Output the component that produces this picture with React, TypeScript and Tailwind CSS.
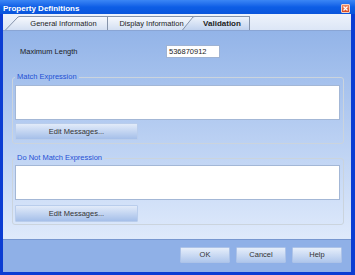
import React from 'react';

function CloseBox() {
  return (
    <div className="mt-[4px] w-[9px] h-[9px] bg-linear-to-b from-[#f08a64] to-[#d9481f] border border-[#f6d2c2] rounded-[1px] flex items-center justify-center">
      <svg width="5" height="5" viewBox="0 0 5 5">
        <path d="M0.5 0.5 L4.5 4.5 M4.5 0.5 L0.5 4.5" stroke="#fff" strokeWidth="1.2" />
      </svg>
    </div>
  );
}

function Slant({ w, from, to, id }: { w: number; from: string; to: string; id: string }) {
  return (
    <svg width={w} height="14" viewBox={`0 0 ${w} 14`} className="shrink-0 block">
      <defs>
        <linearGradient id={id} x1="0" y1="0" x2="0" y2="1">
          <stop offset="0" stopColor={from} />
          <stop offset="1" stopColor={to} />
        </linearGradient>
      </defs>
      <path d={`M0 14 L${w - 2} 1 Q${w - 1} 0.5 ${w} 0.5 L${w} 14 Z`} fill={`url(#${id})`} />
      <path d={`M0.5 14 L${w - 2} 1 Q${w - 1} 0.5 ${w} 0.5`} fill="none" stroke="#8593aa" strokeWidth="1" />
    </svg>
  );
}

function Tabs() {
  return (
    <div className="h-[17px] shrink-0 flex items-end pl-[2px] border-b border-[#8aa5d4] bg-linear-to-b from-[#eef3fb] to-[#dce6f6]">
      <Slant w={15} from="#f7f9fd" to="#d3dff2" id="t1" />
      <div className="w-[88px] h-[14px] flex items-center justify-center pt-[1px] border-t border-r border-[#8593aa] bg-linear-to-b from-[#f7f9fd] to-[#d3dff2]">
        General Information
      </div>
      <div className="w-[87px] h-[14px] flex items-center justify-center pt-[1px] border-t border-[#8593aa] bg-linear-to-b from-[#f7f9fd] to-[#d3dff2]">
        Display Information
      </div>
      <div className="-ml-[13px] flex items-end">
        <Slant w={13} from="#eef3fb" to="#c0d2ee" id="t3" />
        <div className="w-[55px] h-[14px] flex items-center justify-center pt-[1px] border-t border-r border-[#8593aa] bg-linear-to-b from-[#eef3fb] to-[#c0d2ee] font-bold text-[8px]">
          Validation
        </div>
      </div>
    </div>
  );
}

function Group({ title, className, pt, gap }: { title: string; className: string; pt: string; gap: string }) {
  return (
    <fieldset className={`border border-[#cbd4dd] rounded-[3px] pl-[2px] pr-[3px] ${pt} ${className}`}>
      <legend className="px-[2px] leading-[10px] text-[#1f50d4]">{title}</legend>
      <div className="h-[35px] bg-white border border-[#a3b7d6]" />
      <button className={`${gap} w-[123px] h-[17px] flex items-center justify-center border border-[#b9cdec] rounded-[1px] bg-linear-to-b from-[#e2ebf9] to-[#a5bfe9] text-[#333]`}>
        Edit Messages...
      </button>
    </fieldset>
  );
}

export default function App() {
  return (
    <div className="w-[355px] h-[275px] flex flex-col bg-[#0b3dd3] font-['Liberation_Sans',Arial,sans-serif] text-[7.5px] text-[#1c1c1c] overflow-hidden">
      <div className="h-[14px] shrink-0 flex items-start justify-between pl-[3px] pr-[5px] bg-linear-to-b from-[#3b86f5] via-[#0d5ee6] to-[#0a55db]">
        <span className="pt-[5px] text-white font-bold text-[8px] leading-[8px]">Property Definitions</span>
        <CloseBox />
      </div>
      <div className="flex-1 flex flex-col ml-[3px] mr-[4px] mb-[3px]">
        <Tabs />
        <div className="h-[208px] shrink-0 flex flex-col pl-[9px] pr-[7px] bg-linear-to-b from-[#93b4e8] to-[#dfeafb]">
          <div className="flex items-center mt-[14px] pl-[8px] h-[13px]">
            <span className="w-[146px]">Maximum Length</span>
            <div className="w-[54px] h-[13px] bg-white border border-[#9fb3d3] pl-[2px] flex items-center">536870912</div>
          </div>
          <Group title="Match Expression" className="mt-[14px] pb-[3px]" pt="pt-[3px]" gap="mt-[3px]" />
          <Group title="Do Not Match Expression" className="mt-[9px] pb-[2px]" pt="pt-[2px]" gap="mt-[5px]" />
        </div>
        <div className="h-[33px] shrink-0 flex justify-end gap-[6px] pr-[9px] pt-[7px] border-t border-[#7797d0] bg-[#8fb0e7]">
          {['OK', 'Cancel', 'Help'].map(label => (
            <button key={label} className="w-[50px] h-[16px] flex items-center justify-center border border-[#adc3e8] rounded-[1px] bg-linear-to-b from-[#e6eefa] to-[#b0c7ec] text-[#333]">
              {label}
            </button>
          ))}
        </div>
      </div>
    </div>
  );
}
